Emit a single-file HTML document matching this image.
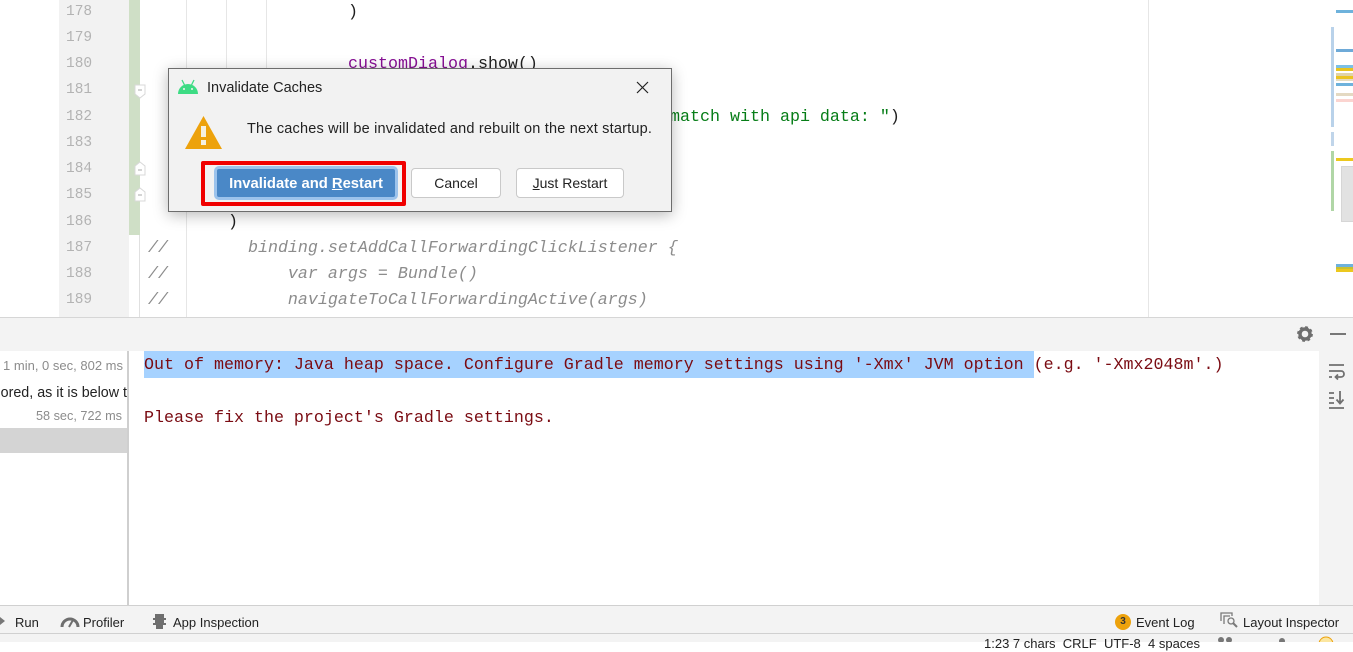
<!DOCTYPE html>
<html><head><meta charset="utf-8">
<style>
html,body{margin:0;padding:0;width:1353px;height:642px;overflow:hidden;background:#fff}
*{box-sizing:border-box}
.a{position:absolute}
.ln{position:absolute;left:66px;font:14.5px/26px "Liberation Mono",monospace;color:#b3b3b3;height:26px}
.c{position:absolute;font:16.67px/26px "Liberation Mono",monospace;color:#1f1f1f;white-space:pre;height:26px}
.it{font-style:italic;color:#8c8c8c}
.ui{position:absolute;font-family:"Liberation Sans",sans-serif;white-space:pre;color:#222}
.g{position:absolute;width:1px;background:#e6e6e6}
.m{position:absolute;left:1336px;width:17px}
.btn{position:absolute;top:168px;height:30px;background:#fff;border:1px solid #c9c9c9;border-radius:4px;font:14px/28px "Liberation Sans",sans-serif;color:#222;text-align:center}
</style></head>
<body>
<!-- editor -->
<div class="a" style="left:59px;top:0;width:70px;height:317px;background:#f2f2f2"></div>
<div class="a" style="left:129px;top:0;width:11px;height:235px;background:#cfdfc6"></div>
<div class="g" style="left:139px;top:235px;height:82px;background:#e0e0e0"></div>
<div class="g" style="left:186px;top:0;height:317px"></div>
<div class="g" style="left:226px;top:0;height:210px"></div>
<div class="g" style="left:266px;top:0;height:210px"></div>
<div class="g" style="left:1148px;top:0;height:317px"></div>
<div class="ln" style="top:-1px">178</div>
<div class="ln" style="top:25px">179</div>
<div class="ln" style="top:51px">180</div>
<div class="ln" style="top:77px">181</div>
<div class="ln" style="top:104px">182</div>
<div class="ln" style="top:130px">183</div>
<div class="ln" style="top:156px">184</div>
<div class="ln" style="top:182px">185</div>
<div class="ln" style="top:209px">186</div>
<div class="ln" style="top:235px">187</div>
<div class="ln" style="top:261px">188</div>
<div class="ln" style="top:287px">189</div>
<div class="c" style="left:348px;top:0px">)</div>
<div class="c" style="left:348px;top:52px"><span style="color:#871094">customDialog</span>.show()</div>
<div class="c" style="left:670px;top:105px;color:#067d17">match with api data: <span style="color:#067d17">"</span><span style="color:#1f1f1f">)</span></div>
<div class="c" style="left:228px;top:210px">)</div>
<div class="c it" style="left:148px;top:236px">//        binding.setAddCallForwardingClickListener {</div>
<div class="c it" style="left:148px;top:262px">//            var args = Bundle()</div>
<div class="c it" style="left:148px;top:288px">//            navigateToCallForwardingActive(args)</div>
<!-- fold markers -->
<svg class="a" style="left:133px;top:84px" width="14" height="120" viewBox="0 0 14 120">
<path d="M2 1H12V10L7 14L2 10Z" fill="#fff" stroke="#d8d8d8"/><path d="M5 6H9" stroke="#aaa"/>
<path d="M2 91V82L7 78L12 82V91Z" fill="#fff" stroke="#d8d8d8"/><path d="M5 86H9" stroke="#aaa"/>
<path d="M2 117V108L7 104L12 108V117Z" fill="#fff" stroke="#d8d8d8"/><path d="M5 111H9" stroke="#aaa"/>
</svg>
<!-- minimap stripes -->
<div class="a" style="left:1331px;top:27px;width:3px;height:100px;background:#b9d2ea"></div>
<div class="a" style="left:1331px;top:132px;width:3px;height:14px;background:#c0d5ea"></div>
<div class="a" style="left:1331px;top:151px;width:3px;height:60px;background:#b0d6a6"></div>
<div class="m" style="top:10px;height:3px;background:#6eb2dc"></div>
<div class="m" style="top:49px;height:3px;background:#6eaad8"></div>
<div class="m" style="top:65px;height:3px;background:#7cc0e6"></div>
<div class="m" style="top:68px;height:3px;background:#e8c41e"></div>
<div class="m" style="top:73px;height:3px;background:#e0d3a8"></div>
<div class="m" style="top:76px;height:3px;background:#ebc422"></div>
<div class="m" style="top:79px;height:2px;background:#e6dcc0"></div>
<div class="m" style="top:83px;height:3px;background:#6eb2dc"></div>
<div class="m" style="top:93px;height:3px;background:#e4d9c2"></div>
<div class="m" style="top:99px;height:3px;background:#fbd4d0"></div>
<div class="m" style="top:158px;height:3px;background:#ecc81e"></div>
<div class="a" style="left:1341px;top:166px;width:12px;height:56px;background:#e2e2e2;border:1px solid #d6d6d6;border-right:0"></div>
<div class="m" style="top:264px;height:3px;background:#6eb2dc"></div>
<div class="m" style="top:267px;height:2px;background:#c8c030"></div>
<div class="m" style="top:269px;height:3px;background:#ecc81e"></div>

<!-- tool window -->
<div class="a" style="left:0;top:317px;width:1353px;height:1px;background:#d6d6d6"></div>
<div class="a" style="left:0;top:318px;width:1353px;height:33px;background:#f3f3f3"></div>
<svg class="a" style="left:1296px;top:325px" width="18" height="18" viewBox="0 0 18 18">
<circle cx="9" cy="9" r="5" fill="none" stroke="#6e6e6e" stroke-width="3.4"/>
<circle cx="9" cy="9" r="6.4" fill="none" stroke="#6e6e6e" stroke-width="3" stroke-dasharray="2.6 2.42"/>
</svg>
<div class="a" style="left:1330px;top:333px;width:16px;height:2px;background:#777"></div>
<div class="a" style="left:1319px;top:351px;width:34px;height:254px;background:#f3f3f3"></div>
<svg class="a" style="left:1328px;top:362px" width="18" height="52" viewBox="0 0 18 52" fill="none" stroke="#707070" stroke-width="1.8">
<path d="M1 3H16M1 9H13C17 9 17 15 13 15H8M10 12.500L7.500 15L10 17.500M1 15H4"/>
<path d="M1 31H6M1 36H6M1 41H6M1 46H16M12 29V41M8.500 37.500L12 41.500L15.500 37.500"/>
</svg>
<div class="a" style="left:0;top:351px;width:127px;height:254px;background:#fff"></div>
<div class="a" style="left:0;top:428px;width:127px;height:25px;background:#d4d4d4"></div>
<div class="a" style="left:127px;top:351px;width:2px;height:254px;background:#cfcfcf"></div>
<div class="ui" style="right:1230px;top:358px;font-size:13px;line-height:16px;color:#8c8c8c">1 min, 0 sec, 802 ms</div>
<div class="a" style="left:0;top:385px;width:127px;height:17px;overflow:hidden"><div class="ui" style="right:0;top:0;font-size:14.3px;line-height:16px;color:#222">ored, as it is below t</div></div>
<div class="ui" style="right:1231px;top:408px;font-size:12.7px;line-height:16px;color:#8c8c8c">58 sec, 722 ms</div>
<div class="a" style="left:144px;top:351px;width:890px;height:27px;background:#a6d2ff"></div>
<div class="c" style="left:144px;top:353px;color:#7a0b12">Out of memory: Java heap space. Configure Gradle memory settings using '-Xmx' JVM option (e.g. '-Xmx2048m'.)</div>
<div class="c" style="left:144px;top:406px;color:#7a0b12">Please fix the project's Gradle settings.</div>

<!-- bottom bar -->
<div class="a" style="left:0;top:605px;width:1353px;height:1px;background:#d0d0d0"></div>
<div class="a" style="left:0;top:606px;width:1353px;height:36px;background:#f3f3f3"></div>
<div class="a" style="left:0;top:633px;width:1353px;height:1px;background:#d0d0d0"></div>
<svg class="a" style="left:0;top:616px" width="6" height="12"><path d="M0 1L5 5L0 9Z" fill="#777"/></svg>
<div class="ui" style="left:15px;top:615px;font-size:13px;line-height:16px">Run</div>
<svg class="a" style="left:60px;top:616px" width="20" height="14" viewBox="0 0 20 14"><path d="M2 11A8 8 0 0 1 18 11" fill="none" stroke="#6e6e6e" stroke-width="3"/><path d="M9 11L13 4" stroke="#6e6e6e" stroke-width="2"/></svg>
<div class="ui" style="left:83px;top:615px;font-size:13px;line-height:16px">Profiler</div>
<svg class="a" style="left:152px;top:613px" width="15" height="17" viewBox="0 0 15 17"><path d="M3 1H12V5H14V7H12V10H14V12H11V16H4V12H1V10H3V7H1V5H3Z" fill="#6e6e6e"/></svg>
<div class="ui" style="left:173px;top:615px;font-size:13px;line-height:16px">App Inspection</div>
<div class="a" style="left:1115px;top:614px;width:16px;height:16px;border-radius:50%;background:#eda20c;font:bold 10px/16px 'Liberation Sans',sans-serif;color:#333;text-align:center">3</div>
<div class="ui" style="left:1136px;top:615px;font-size:13px;line-height:16px">Event Log</div>
<svg class="a" style="left:1220px;top:612px" width="18" height="16" viewBox="0 0 18 16" fill="none" stroke="#7a7a7a" stroke-width="1.3"><path d="M1 9V1H12V4M4 12V4H10"/><circle cx="11" cy="9" r="3"/><path d="M13 11L17 15" stroke-width="2"/></svg>
<div class="ui" style="left:1243px;top:615px;font-size:13px;line-height:16px">Layout Inspector</div>
<div class="ui" style="left:984px;top:636px;font-size:13px;line-height:16px">1:23 7 chars  CRLF  UTF-8  4 spaces</div>
<svg class="a" style="left:1210px;top:636px" width="143" height="6"><circle cx="11" cy="4" r="3" fill="#777"/><circle cx="19" cy="4" r="3" fill="#777"/><circle cx="72" cy="5" r="3" fill="#777"/><circle cx="116" cy="8" r="7" fill="#fbe6a0" stroke="#eda20c"/></svg>

<!-- dialog -->
<div class="a" style="left:168px;top:68px;width:504px;height:144px;background:#f2f2f2;border:1px solid #6d6d6d;box-shadow:0 3px 14px rgba(0,0,0,.28)">
<svg class="a" style="left:9px;top:10px" width="20" height="16" viewBox="0 0 20 16"><path d="M0 15A10 10 0 0 1 20 15Z" fill="#3ddc84"/><path d="M4 1L7 7M16 1L13 7" stroke="#3ddc84" stroke-width="1.3"/><circle cx="6" cy="10" r="1" fill="#f2f2f2"/><circle cx="14" cy="10" r="1" fill="#f2f2f2"/></svg>
<div class="ui" style="left:38px;top:11px;font-size:14.5px;line-height:17px">Invalidate Caches</div>
<svg class="a" style="left:467px;top:12px" width="13" height="13" viewBox="0 0 13 13"><path d="M1 1L12 12M12 1L1 12" stroke="#222" stroke-width="1.2"/></svg>
<svg class="a" style="left:16px;top:47px" width="37" height="33" viewBox="0 0 37 33"><path d="M18.500 0L37 33H0Z" fill="#eda20c"/><rect x="16" y="10" width="5" height="11" fill="#f5f0e0"/><rect x="16" y="24" width="5" height="5" fill="#f5f0e0"/></svg>
<div class="ui" style="left:78px;top:52px;font-size:14.5px;line-height:17px;letter-spacing:.2px">The caches will be invalidated and rebuilt on the next startup.</div>
</div>
<div class="a" style="left:201px;top:161px;width:205px;height:45px;border:4px solid #f00000;border-radius:2px"></div>
<div class="a" style="left:214px;top:166px;width:184px;height:34px;background:#4a88c7;border:3px solid #9cc3ec;border-radius:5px;font:bold 14.8px/31px 'Liberation Sans',sans-serif;color:#fff;text-align:center;white-space:pre">Invalidate and <u>R</u>estart</div>
<div class="btn" style="left:411px;width:90px">Cancel</div>
<div class="btn" style="left:516px;width:108px"><u>J</u>ust Restart</div>
</body></html>
